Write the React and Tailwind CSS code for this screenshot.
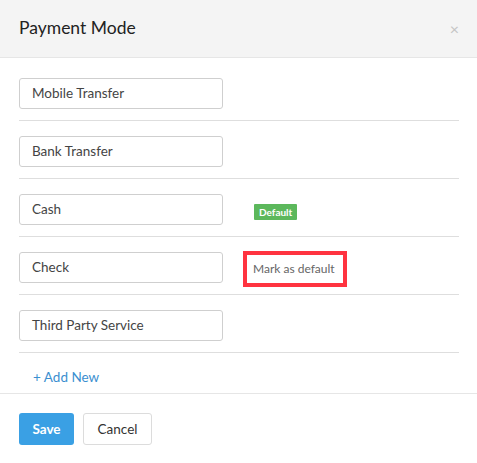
import React, { useState } from 'react';

const modes = ['Mobile Transfer', 'Bank Transfer', 'Cash', 'Check', 'Third Party Service'];

export default function App() {
  const [defaultMode] = useState('Cash');

  return (
    <div className="w-[477px] h-[463px] bg-white text-[#333] font-['Lato',sans-serif]">
      <div className="h-[58px] bg-[#f4f4f4] border-b border-[#e6e6e6] flex items-center justify-between pl-[19px] pr-[18px]">
        <h2 className="text-[17.5px] text-[#222] font-normal">Payment Mode</h2>
        <button className="text-[#c4c4c4] text-[16px] leading-none">×</button>
      </div>

      <div className="px-[19px] pt-[5px]">
        {modes.map((m) => (
          <div key={m} className="pt-[15px] pb-[11px] border-b border-[#dedede] mr-[-1px] flex items-start">
            <div className="w-[204px] h-[31px] border border-[#cfcfcf] rounded-[3px] flex items-center px-[12px] text-[13.5px] text-[#444]">
              {m}
            </div>
            {m === defaultMode && (
              <span className="ml-[31px] mt-[10px] bg-[#5cb85c] text-white text-[10px] font-bold px-[5px] h-[16px] flex items-center rounded-[1px]">
                Default
              </span>
            )}
            {m === 'Check' && (
              <span className="ml-[20px] mt-[-1px] mb-[-4px] border-[4px] border-[#ff3340] h-[36px] w-[104px] flex items-center pl-[6px] text-[12px] text-[#666]">
                Mark as default
              </span>
            )}
          </div>
        ))}
        <div className="h-[40px] flex items-center pt-[8px] pl-[14px]">
          <button className="text-[#3b8fd0] text-[13.5px]">+ Add New</button>
        </div>
      </div>

      <div className="border-t border-[#e6e6e6] px-[19px] pt-[19px] flex gap-[9px]">
        <button className="w-[55px] h-[32px] bg-[#3aa0e4] text-white text-[13.5px] font-bold rounded-[3px]">Save</button>
        <button className="w-[69px] h-[32px] bg-white border border-[#dcdcdc] text-[#333] text-[13.5px] rounded-[3px]">Cancel</button>
      </div>
    </div>
  );
}
